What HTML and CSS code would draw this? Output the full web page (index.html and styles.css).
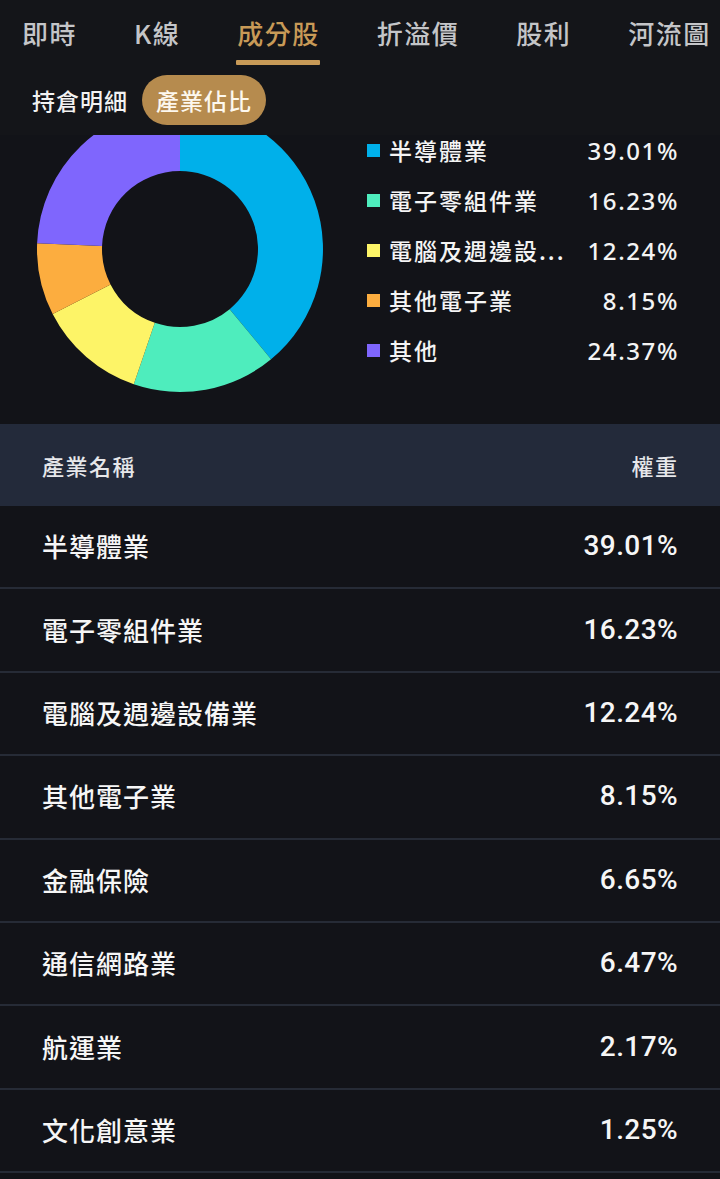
FILE: index.html
```html
<!DOCTYPE html>
<html lang="zh-Hant">
<head>
<meta charset="utf-8">
<title>成分股 產業佔比</title>
<link rel="stylesheet" href="styles.css">
</head>
<body>
<div class="page">
  <header class="top">
    <nav class="tabs">
      <span class="tab">即時</span>
      <span class="tab">K線</span>
      <span class="tab active">成分股</span>
      <span class="tab">折溢價</span>
      <span class="tab">股利</span>
      <span class="tab">河流圖</span>
    </nav>
    <div class="seg">
      <span class="seg-item">持倉明細</span>
      <span class="seg-item on">產業佔比</span>
    </div>
  </header>

  <section class="chart">
    <svg class="donut" width="360" height="289" viewBox="0 0 360 289">
      <path fill="#00b0ea" d="M180 -29 A143 143 0 0 1 271.06 224.25 L229.67 174.14 A78 78 0 0 0 180 36 Z"/>
      <path fill="#4eedbd" d="M271.06 224.25 A143 143 0 0 1 133.77 249.32 L154.78 187.81 A78 78 0 0 0 229.67 174.14 Z"/>
      <path fill="#fdf467" d="M133.77 249.32 A143 143 0 0 1 52.66 179.08 L110.54 149.5 A78 78 0 0 0 154.78 187.81 Z"/>
      <path fill="#fcad3f" d="M52.66 179.08 A143 143 0 0 1 37.11 108.34 L102.06 110.91 A78 78 0 0 0 110.54 149.5 Z"/>
      <path fill="#7f66fd" d="M37.11 108.34 A143 143 0 0 1 180 -29 L180 36 A78 78 0 0 0 102.06 110.91 Z"/>
    </svg>
    <ul class="legend">
      <li class="lg"><i class="sw c1"></i><span class="lg-name">半導體業</span><span class="lg-pct">39.01%</span></li>
      <li class="lg"><i class="sw c2"></i><span class="lg-name">電子零組件業</span><span class="lg-pct">16.23%</span></li>
      <li class="lg"><i class="sw c3"></i><span class="lg-name">電腦及週邊設...</span><span class="lg-pct">12.24%</span></li>
      <li class="lg"><i class="sw c4"></i><span class="lg-name">其他電子業</span><span class="lg-pct">8.15%</span></li>
      <li class="lg"><i class="sw c5"></i><span class="lg-name">其他</span><span class="lg-pct">24.37%</span></li>
    </ul>
  </section>

  <section class="table">
    <div class="thead"><span>產業名稱</span><span>權重</span></div>
    <div class="row"><span class="name">半導體業</span><span class="val">39.01%</span></div>
    <div class="row"><span class="name">電子零組件業</span><span class="val">16.23%</span></div>
    <div class="row"><span class="name">電腦及週邊設備業</span><span class="val">12.24%</span></div>
    <div class="row"><span class="name">其他電子業</span><span class="val">8.15%</span></div>
    <div class="row"><span class="name">金融保險</span><span class="val">6.65%</span></div>
    <div class="row"><span class="name">通信網路業</span><span class="val">6.47%</span></div>
    <div class="row"><span class="name">航運業</span><span class="val">2.17%</span></div>
    <div class="row"><span class="name">文化創意業</span><span class="val">1.25%</span></div>
  </section>
</div>
</body>
</html>
```

FILE: styles.css
```css
* { box-sizing: border-box; }
html, body { margin: 0; padding: 0; }
body {
  background: #121318;
  color: #f2f2f2;
  font-family: "Noto Sans CJK TC", "Noto Sans", sans-serif;
  width: 720px;
  height: 1179px;
  overflow: hidden;
}
.page { width: 720px; }

.top { background: #141519; }
.tabs {
  display: flex;
  gap: 57px;
  padding-left: 22px;
  height: 66px;
  white-space: nowrap;
}
.tab {
  font-size: 26px;
  font-weight: 500;
  color: #c4c5c8;
  line-height: 66px;
  height: 66px;
  position: relative;
  letter-spacing: 1.5px;
}
.tab.active { color: #c89a57; }
.tab.active::after {
  content: "";
  position: absolute;
  left: -1px;
  right: 0;
  bottom: 1px;
  height: 5px;
  background: #c89a57;
  border-radius: 1px;
}
.seg {
  display: flex;
  align-items: center;
  height: 69px;
  padding-left: 18px;
  padding-bottom: 2px;
}
.seg-item {
  font-size: 23px;
  font-weight: 500;
  height: 50px;
  line-height: 50px;
  padding: 0 14px;
  border-radius: 25px;
  color: #f2f2f2;
  letter-spacing: 1px;
}
.seg-item.on { background: #b68b4e; color: #fdf8ee; }

.chart {
  display: flex;
  height: 289px;
}
.donut { display: block; flex: none; }
.legend {
  list-style: none;
  margin: 0;
  padding: 0 43px 0 7px;
  flex: 1;
  min-width: 0;
  display: flex;
  flex-direction: column;
  gap: 20px;
}
.lg {
  display: flex;
  align-items: center;
  height: 30px;
  font-size: 23px;
  font-weight: 500;
  letter-spacing: 2px;
  color: #f4f4f4;
}
.sw {
  width: 13px;
  height: 13px;
  flex: none;
  margin-right: 9px;
}
.c1 { background: #00b0ea; }
.c2 { background: #4eedbd; }
.c3 { background: #fdf467; }
.c4 { background: #fcad3f; }
.c5 { background: #7f66fd; }
.lg-name {
  flex: 1;
  min-width: 0;
  white-space: nowrap;
}
.lg-pct {
  flex: none;
  margin-left: 10px;
  font-family: "Noto Sans", sans-serif;
  font-size: 24px;
  font-weight: 500;
  letter-spacing: 1.6px;
  margin-right: -2px;
}

.thead {
  display: flex;
  justify-content: space-between;
  align-items: center;
  height: 82px;
  padding: 0 43px 0 42px;
  background: #232a3a;
  font-size: 22px;
  font-weight: 500;
  letter-spacing: 1.5px;
  color: #e6e7ea;
}
.thead span:last-child { margin-right: -1.5px; }
.row {
  display: flex;
  justify-content: space-between;
  align-items: center;
  height: 83.4px;
  padding: 0 43px 2px 42px;
  border-bottom: 2px solid #262b36;
  font-size: 26px;
  font-weight: 500;
  letter-spacing: 1px;
  color: #f6f6f6;
}
.val {
  font-family: "Roboto", sans-serif;
  font-size: 28px;
  font-weight: 500;
  letter-spacing: 0.4px;
  margin-right: -1px;
}
```
